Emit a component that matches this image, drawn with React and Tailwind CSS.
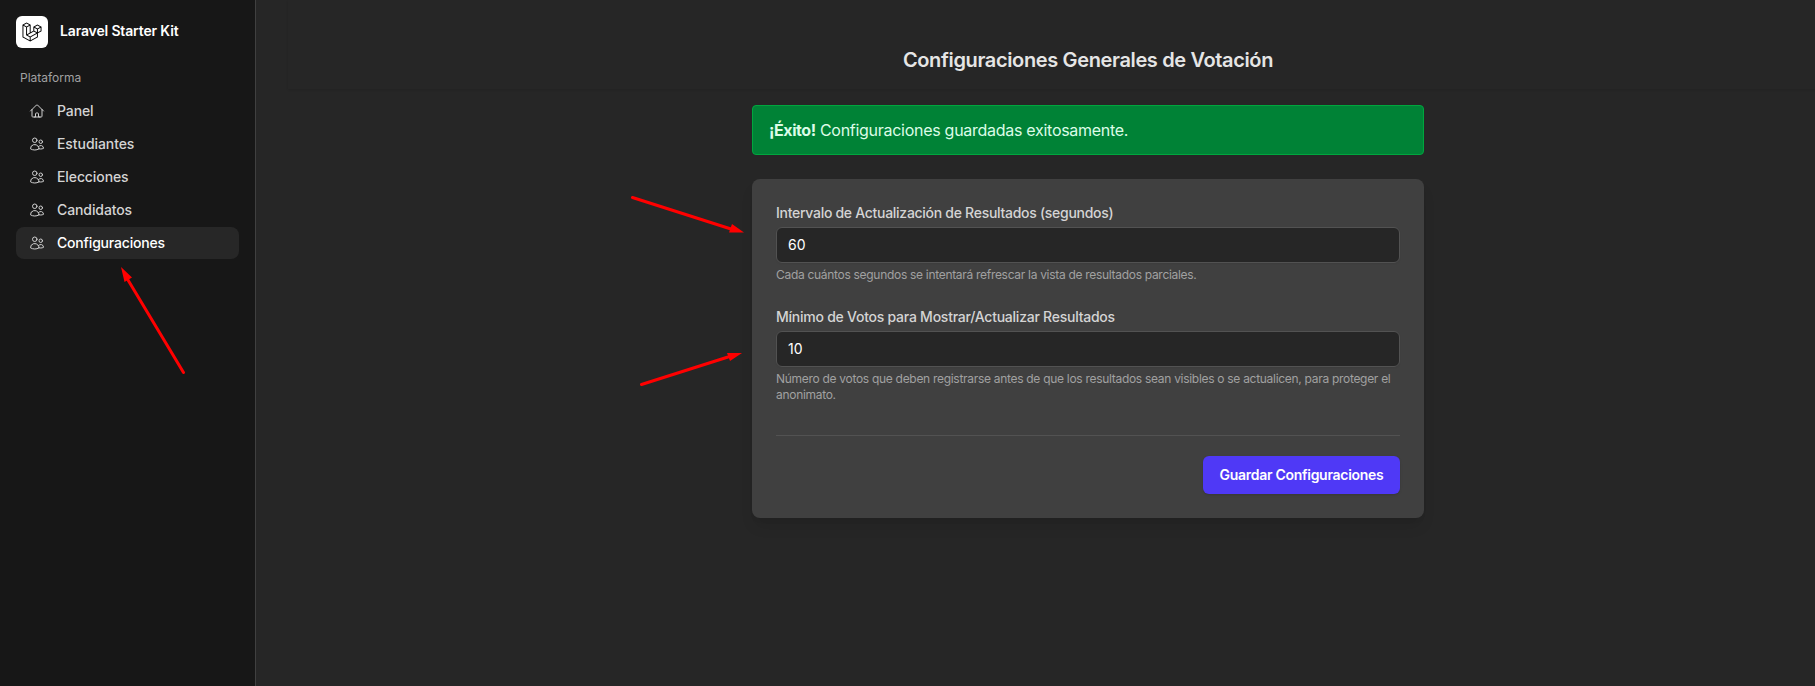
import { HiOutlineHome, HiOutlineUsers } from "react-icons/hi2";

const navItems = [
  { label: "Panel", icon: HiOutlineHome, track: "tracking-[-0.1px]" },
  { label: "Estudiantes", icon: HiOutlineUsers, track: "tracking-[-0.07px]" },
  { label: "Elecciones", icon: HiOutlineUsers, track: "tracking-[-0.1px]" },
  { label: "Candidatos", icon: HiOutlineUsers, track: "tracking-[-0.1px]" },
  { label: "Configuraciones", icon: HiOutlineUsers, track: "tracking-[-0.18px]", active: true },
];

function LogoIcon() {
  return (
    <svg viewBox="0 0 40 42" className="size-5" fill="#000">
      <path
        fillRule="evenodd"
        clipRule="evenodd"
        d="M17.2 5.633 8.6.855 0 5.633v26.51l16.2 9 16.2-9v-8.444l7.6-4.222V9.856l-8.6-4.777-8.6 4.777V18.3l-5.6 3.111V5.633ZM38 18.301l-5.6 3.11v-6.157l5.6-3.11V18.3Zm-1.06-7.856-5.54 3.078-5.54-3.079 5.54-3.078 5.54 3.079ZM24.8 18.3v-6.157l5.6 3.111v6.158L24.8 18.3Zm-1 1.732 5.54 3.078-13.14 7.302-5.54-3.078 13.14-7.3v-.002Zm-16.2 7.89 7.6 4.222V38.3L2 30.966V7.92l5.6 3.111v16.892ZM8.6 9.3 3.06 6.222 8.6 3.143l5.54 3.08L8.6 9.3Zm21.8 15.51-13.2 7.334V38.3l13.2-7.334v-6.156ZM9.6 11.034l5.6-3.11v14.6l-5.6 3.11v-14.6Z"
      />
    </svg>
  );
}

function Sidebar() {
  return (
    <aside className="flex w-64 shrink-0 flex-col border-r border-[#404040] bg-[#171717] p-4">
      <div className="flex h-8 items-center gap-3">
        <div className="flex size-8 items-center justify-center rounded-md bg-white">
          <LogoIcon />
        </div>
        <span className="mb-[3px] whitespace-nowrap text-[14px] font-semibold tracking-[-0.15px] text-white">
          Laravel Starter Kit
        </span>
      </div>
      <div className="mt-5 flex h-5 items-center pl-1 text-xs text-[#a1a1a1]">Plataforma</div>
      <nav className="mt-[7px] flex flex-col gap-px">
        {navItems.map(({ label, icon: Icon, active, track }) => (
          <a
            key={label}
            className={`flex h-8 items-center gap-3 rounded-lg px-3 ${active ? "bg-[#272727] text-white" : "text-[#d4d4d4]"}`}
          >
            <Icon className="ml-px size-4 text-[#d0d0d0]" />
            <span className={`text-sm font-medium ${track}`}>{label}</span>
          </a>
        ))}
      </nav>
    </aside>
  );
}

function Field({ label, labelTrack, value, help, helpTrack }) {
  return (
    <div>
      <label className={`block text-sm font-medium text-[#d4d4d4] ${labelTrack}`}>{label}</label>
      <div className="mt-1 flex h-9 items-center rounded-md border border-[#525252] bg-[#262626] px-[11px] text-sm text-white shadow-xs">
        {value}
      </div>
      <p className={`mt-1 whitespace-pre text-xs text-[#a1a1a1] ${helpTrack}`}>{help}</p>
    </div>
  );
}

function Arrows() {
  return (
    <svg className="pointer-events-none absolute inset-0 h-full w-full" fill="#ff0000" stroke="#ff0000">
      <path d="M183.500 372.500 128 280M632.500 197.500 731 229M641.500 384.500 728 357" fill="none" strokeWidth="3" strokeLinecap="round" />
      <path d="M121 267 132 277.500 124.500 282ZM744 232.500 732 224 729 232.500ZM742 353 727 353 730 361Z" stroke="none" />
    </svg>
  );
}

export default function App() {
  return (
    <div className="relative flex h-[686px] w-full overflow-hidden bg-[#262626] font-['Inter',sans-serif]">
      <Sidebar />
      <main className="flex w-[1664px] shrink-0 flex-col p-8 pt-0">
        <header className="flex h-[89px] items-center justify-center pt-[30px] shadow-[0_1px_2px_0_rgb(0_0_0/0.1)]">
          <h1 className="text-xl font-semibold tracking-[-0.36px] text-[#e5e5e5]">
            Configuraciones Generales de Votación
          </h1>
        </header>
        <div className="mx-auto mt-4 w-[672px]">
          <div className="flex h-[50px] items-center rounded border border-[#00a63e] bg-[#008236] px-4 text-base text-[#dcfce7]">
            <p className="tracking-[-0.28px]">
              <strong className="font-bold tracking-[-0.42px]">¡Éxito!</strong> Configuraciones guardadas exitosamente.
            </p>
          </div>
          <section className="mt-6 h-[339px] rounded-lg bg-[#404040] p-6 shadow-lg">
            <div className="flex flex-col gap-6">
              <Field
                label="Intervalo de Actualización de Resultados (segundos)"
                labelTrack="tracking-[-0.285px]"
                value="60"
                help="Cada cuántos segundos se intentará refrescar la vista de resultados parciales."
                helpTrack="tracking-[-0.3px]"
              />
              <Field
                label="Mínimo de Votos para Mostrar/Actualizar Resultados"
                labelTrack="tracking-[-0.245px]"
                value="10"
                help={"Número de votos que deben registrarse antes de que los resultados sean visibles o se actualicen, para proteger el\nanonimato."}
                helpTrack="tracking-[-0.295px]"
              />
            </div>
            <div className="mt-8 flex justify-end border-t border-[#525252] pt-5">
              <button className="flex h-[38px] w-[197px] items-center justify-center whitespace-nowrap rounded-md bg-[#4f39f6] text-sm font-semibold tracking-[-0.28px] text-white shadow-sm">
                Guardar Configuraciones
              </button>
            </div>
          </section>
        </div>
      </main>
      <Arrows />
    </div>
  );
}
